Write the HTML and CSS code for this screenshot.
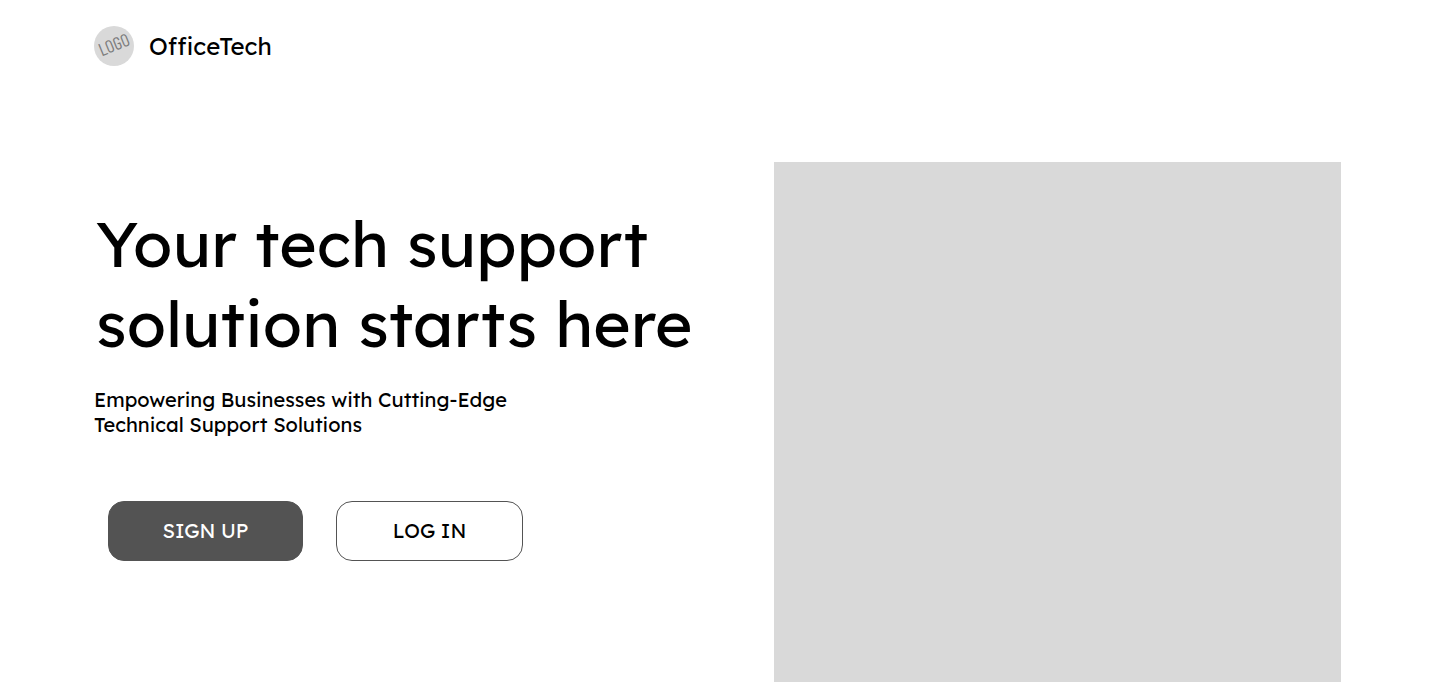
FILE: index.html
```html
<!DOCTYPE html>
<html lang="en">
<head>
<meta charset="utf-8">
<meta name="viewport" content="width=device-width, initial-scale=1">
<title>OfficeTech</title>
<link rel="stylesheet" href="styles.css">
</head>
<body>
<header class="header">
  <span class="logo"><span class="logo-text">LOGO</span></span>
  <span class="brand">OfficeTech</span>
</header>
<main class="hero">
  <section class="intro">
    <h1 class="title">Your tech support<br>solution starts here</h1>
    <p class="tagline">Empowering Businesses with Cutting-Edge<br>Technical Support Solutions</p>
    <div class="actions">
      <button class="button button-primary" type="button">SIGN UP</button>
      <button class="button button-outline" type="button">LOG IN</button>
    </div>
  </section>
  <div class="media"></div>
</main>
</body>
</html>
```
FILE: styles.css
```css
* {
  box-sizing: border-box;
}

body {
  margin: 0;
  min-height: 100vh;
  display: flex;
  flex-direction: column;
  background: #fff;
  color: #000;
  font-family: Lexend, Lato, sans-serif;
}

.header {
  display: flex;
  align-items: center;
  gap: 15px;
  padding: 26px 94px 0;
}

.logo {
  display: flex;
  align-items: center;
  justify-content: center;
  width: 40px;
  height: 40px;
  padding-bottom: 4px;
  border-radius: 50%;
  background: #d9d9d9;
}

.logo-text {
  color: #7c7c7c;
  font-family: "Barlow Condensed", "Roboto Condensed", sans-serif;
  font-size: 18px;
  font-weight: 400;
  line-height: 18px;
  transform: rotate(-22deg);
}

.brand {
  font-size: 24px;
  line-height: 32px;
}

.hero {
  flex: 1;
  display: flex;
  gap: 40px;
  padding: 96px 99px 0 94px;
}

.intro {
  flex: 1;
  padding-top: 41px;
}

.title {
  margin: 0;
  padding-left: 2px;
  font-size: 64px;
  font-weight: 400;
  line-height: 80px;
  white-space: nowrap;
}

.tagline {
  margin: 24px 0 0;
  font-size: 20px;
  line-height: 25px;
}

.actions {
  display: flex;
  gap: 33px;
  padding: 64px 14px 0;
}

.button {
  height: 60px;
  padding: 0 0 2px;
  border: 1px solid #535353;
  border-radius: 16px;
  font-family: inherit;
  font-size: 20px;
}

.button-primary {
  width: 195px;
  background: #535353;
  color: #fff;
}

.button-outline {
  width: 187px;
  background: #fff;
  color: #000;
}

.media {
  flex: 0 0 567px;
  background: #d9d9d9;
}
```
